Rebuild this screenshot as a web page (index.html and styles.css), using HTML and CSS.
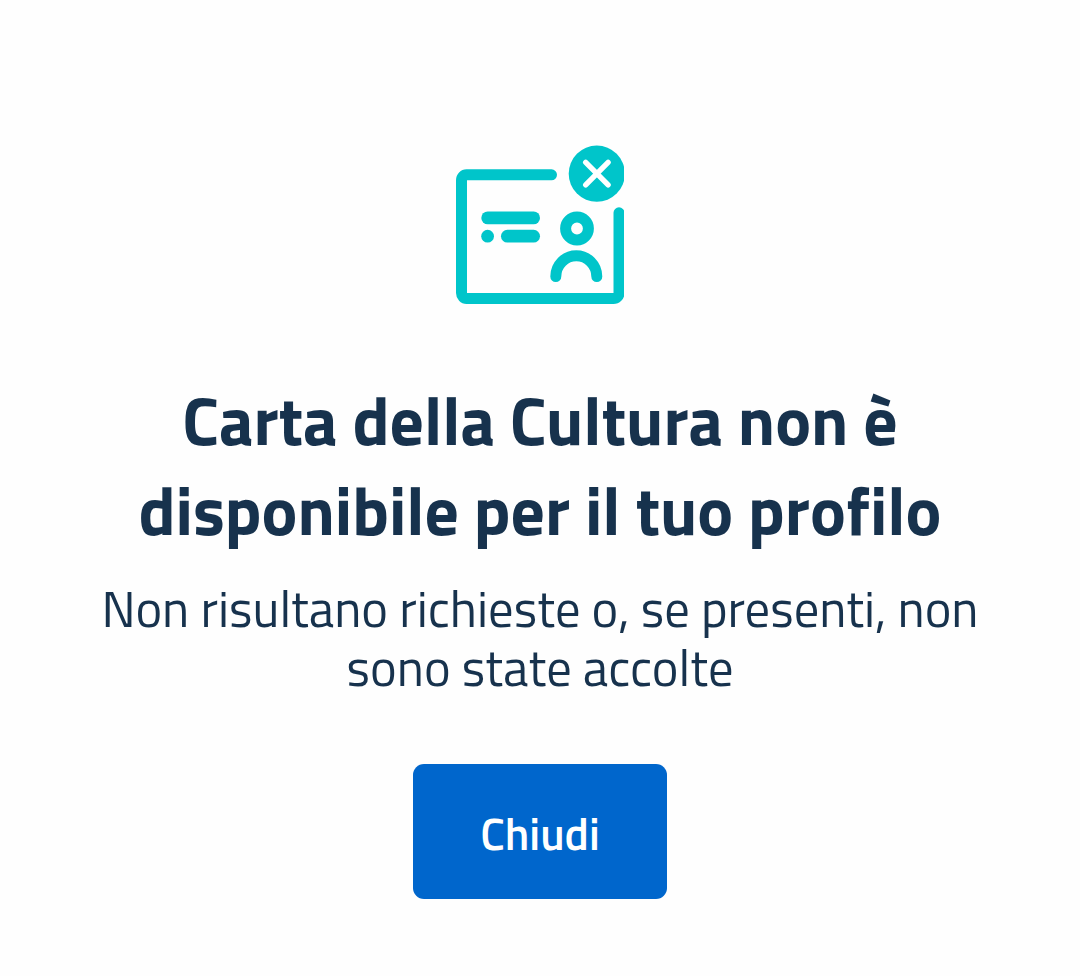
FILE: index.html
```
<!DOCTYPE html>
<html lang="it">
<head>
    <meta charset="UTF-8">
    <meta name="viewport" content="width=device-width, initial-scale=1.0">
    <title>Carta della Cultura</title>
    <link rel="stylesheet" href="styles.css">
</head>
<body>
    <main class="message">
        <!-- card icon -->
        <svg class="icon" viewBox="0 0 168 160" width="168" height="160" aria-hidden="true">
            <path class="fill" d="M10.5 24.3H95.5a5.5 5.5 0 0 1 0 11H11V148H157.5V67.8a5.5 5.5 0 0 1 11 0V148a11 11 0 0 1-11 11H10.5A10.5 11 0 0 1 0 148V35.3A10.5 11 0 0 1 10.5 24.3z"/>
            <rect class="fill" x="25.3" y="66.5" width="58.7" height="12.8" rx="6.4"/>
            <circle class="fill" cx="31.6" cy="91.2" r="6.4"/>
            <rect class="fill" x="45" y="84.8" width="39" height="12.8" rx="6.4"/>
            <circle class="line" cx="121" cy="83.5" r="11.4"/>
            <path class="line" d="M99.8 131.5a20.5 20.7 0 0 1 41 0"/>
            <circle class="fill" cx="140.8" cy="28.7" r="28.1"/>
            <path class="cross" d="M129.7 17.4l22.4 22.4M152.1 17.4l-22.4 22.4"/>
        </svg>

        <h1 class="title">Carta della Cultura non è disponibile per il tuo profilo</h1>
        <p class="text">Non risultano richieste o, se presenti, non sono state accolte</p>

        <button type="button" class="close">Chiudi</button>
    </main>
</body>
</html>
```
FILE: styles.css
```
*{
    margin: 0;
    padding: 0;
    box-sizing: border-box;
}
body{
    font-family: "Titillium Web", Roboto, sans-serif;
    color: #17324d;
    background: #fefefe;
}
.message{
    display: flex;
    flex-direction: column;
    align-items: center;
    padding: 145px 90px 0;
    text-align: center;
}
.icon{
    display: block;
}
.fill{
    fill: #00c5ca;
}
.line{
    fill: none;
    stroke: #00c5ca;
    stroke-width: 11;
    stroke-linecap: round;
}
.cross{
    fill: none;
    stroke: #fff;
    stroke-width: 5.4;
    stroke-linecap: round;
}
.title{
    margin-top: 70px;
    font-size: 67.5px;
    font-weight: 700;
    line-height: 90px;
}
.text{
    margin-top: 24px;
    font-size: 50.6px;
    font-weight: 400;
    line-height: 59px;
}
.close{
    width: 254px;
    height: 135px;
    margin-top: 67px;
    padding-top: 3px;
    border: none;
    border-radius: 11px;
    font-family: inherit;
    font-size: 45px;
    font-weight: 600;
    color: #fff;
    background: #0066cc;
}
```
